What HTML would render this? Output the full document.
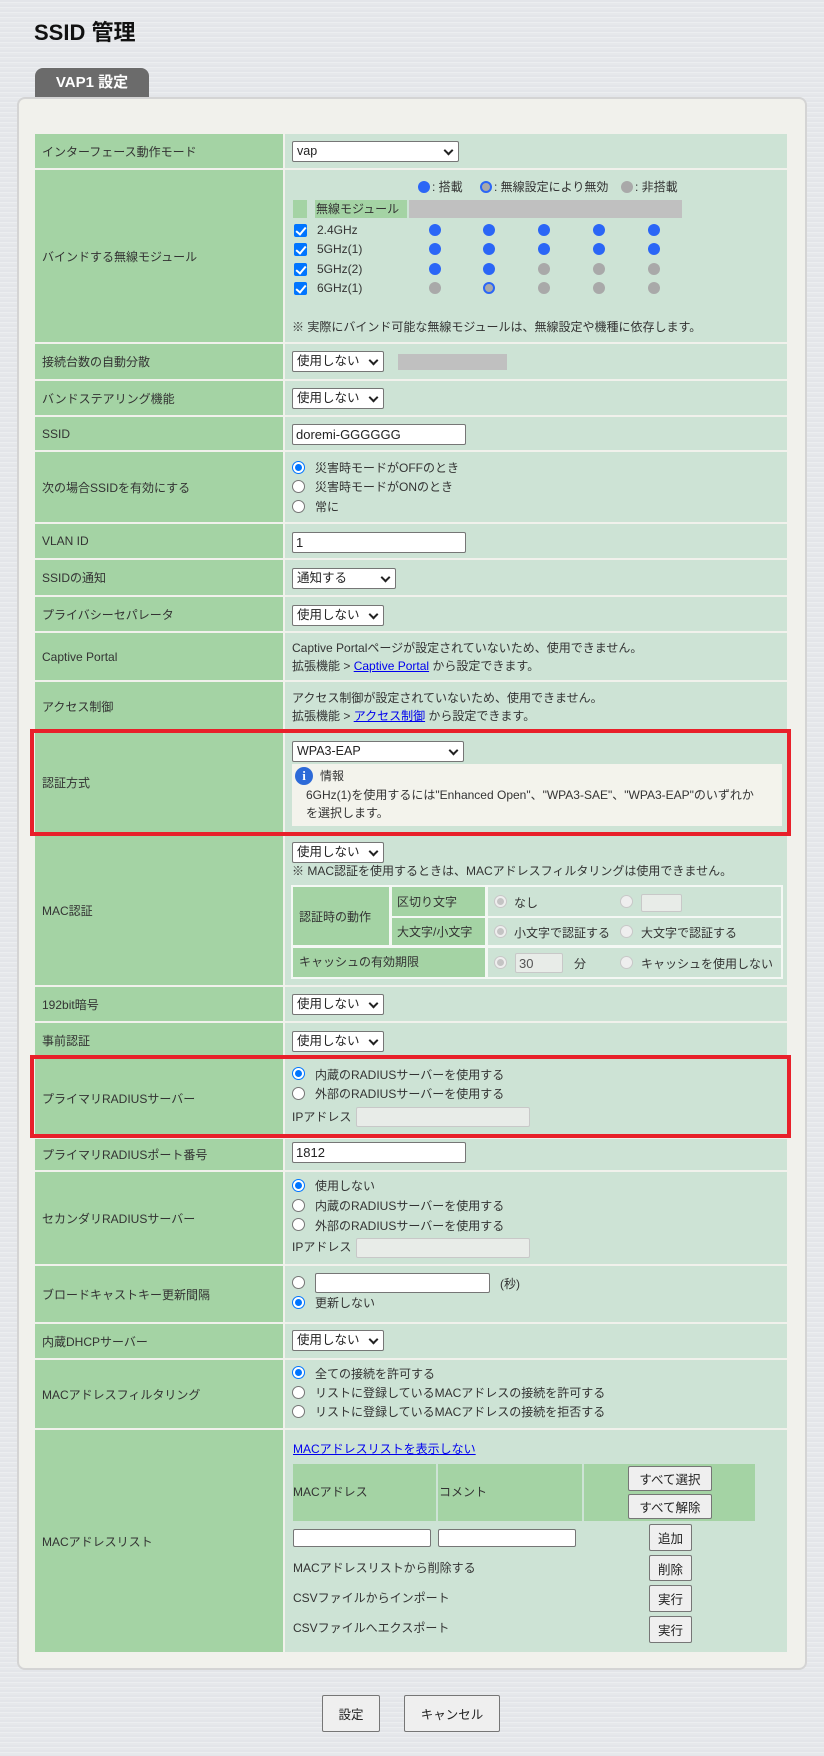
<!DOCTYPE html>
<html><head><meta charset="utf-8"><style>
*{box-sizing:border-box;margin:0;padding:0}
body{width:824px;height:1756px;position:relative;overflow:hidden;font-family:"Liberation Sans","Noto Sans CJK JP",sans-serif;font-size:12px;color:#333;
background:#e7e9ec repeating-linear-gradient(180deg,#e3e5e9 0 2px,#eceef0 2px 3px,#e6e8eb 3px 5px)}
.a{position:absolute}
.l{position:absolute;left:35px;width:248px;background:#a4d3a4;display:flex;align-items:center;padding-left:7px}
.v{position:absolute;left:285px;width:502px;background:#cde3d5}
.t{position:absolute;white-space:nowrap;line-height:14px;transform:translateY(-7px)}
.sel{position:absolute;height:21px;background:#fff;border:1px solid #767676;border-radius:2px;padding-left:4px;line-height:19px;font-size:12.5px;color:#222}
.sel:after{content:"";position:absolute;right:6px;top:5px;width:5px;height:5px;border-right:2px solid #222;border-bottom:2px solid #222;transform:rotate(45deg)}
.in{position:absolute;height:21px;background:#fff;border:1px solid #767676;border-radius:2px;padding-left:3px;line-height:19px;font-size:13px;color:#222}
.dis{background:#e8ece8;border-color:#c8c8c8}
.r{position:absolute;width:13px;height:13px;border-radius:50%;border:1px solid #767676;background:#fff;transform:translateY(-6px)}
.r.on{border:1px solid #0075ff;background:#fff}
.r.on:after{content:"";position:absolute;left:2px;top:2px;width:7px;height:7px;border-radius:50%;background:#0075ff}
.r.g{border-color:#c8c8c8;background:#eee}
.r.gon{border-color:#c8c8c8;background:#eee}
.r.gon:after{content:"";position:absolute;left:2px;top:2px;width:7px;height:7px;border-radius:50%;background:#c4c4c4}
.cb{position:absolute;width:13px;height:13px;border-radius:2px;background:#0075ff;transform:translateY(-6px)}
.cb:after{content:"";position:absolute;left:4px;top:1px;width:4px;height:8px;border-right:2px solid #fff;border-bottom:2px solid #fff;transform:rotate(40deg)}
.d{position:absolute;width:12px;height:12px;border-radius:50%;background:#2b66f6;transform:translate(-6px,-6px)}
.d.g{background:#a9a9a9}
.d.x{background:#a9a9a9;border:2px solid #2b66f6}
.btn{position:absolute;background:#efefef;border:1px solid #767676;border-radius:2px;text-align:center;font-size:12.5px;color:#222;display:flex;align-items:center;justify-content:center}
.red{position:absolute;left:30px;width:761px;border:4px solid #e8202a}
a{color:#00e;text-decoration:underline}
.gc{position:absolute;background:#a4d3a4}
.lc{position:absolute;background:#cde3d5}
</style></head><body>
<div class="a" style="left:34px;top:19px;font-size:22px;font-weight:bold;color:#111;line-height:28px">SSID 管理</div>
<div class="a" style="left:35px;top:68px;width:114px;height:30px;background:#6b6b6b;border-radius:8px 8px 0 0;color:#fff;font-weight:bold;font-size:15px;text-align:center;line-height:30px">VAP1 設定</div>
<div class="a" style="left:17px;top:97px;width:790px;height:1573px;background:#f1f1ec;border:2px solid #d4d4d4;border-radius:8px"></div>

<!-- rows -->
<div class="l" style="top:134px;height:34px">インターフェース動作モード</div><div class="v" style="top:134px;height:34px"></div>
<div class="l" style="top:170px;height:172px">バインドする無線モジュール</div><div class="v" style="top:170px;height:172px"></div>
<div class="l" style="top:344px;height:35px">接続台数の自動分散</div><div class="v" style="top:344px;height:35px"></div>
<div class="l" style="top:381px;height:34px">バンドステアリング機能</div><div class="v" style="top:381px;height:34px"></div>
<div class="l" style="top:417px;height:33px">SSID</div><div class="v" style="top:417px;height:33px"></div>
<div class="l" style="top:452px;height:70px">次の場合SSIDを有効にする</div><div class="v" style="top:452px;height:70px"></div>
<div class="l" style="top:524px;height:34px">VLAN ID</div><div class="v" style="top:524px;height:34px"></div>
<div class="l" style="top:560px;height:35px">SSIDの通知</div><div class="v" style="top:560px;height:35px"></div>
<div class="l" style="top:597px;height:34px">プライバシーセパレータ</div><div class="v" style="top:597px;height:34px"></div>
<div class="l" style="top:633px;height:47px">Captive Portal</div><div class="v" style="top:633px;height:47px"></div>
<div class="l" style="top:682px;height:48px">アクセス制御</div><div class="v" style="top:682px;height:48px"></div>
<div class="l" style="top:731px;height:103px">認証方式</div><div class="v" style="top:731px;height:103px"></div>
<div class="l" style="top:836px;height:149px">MAC認証</div><div class="v" style="top:836px;height:149px"></div>
<div class="l" style="top:987px;height:34px">192bit暗号</div><div class="v" style="top:987px;height:34px"></div>
<div class="l" style="top:1023px;height:34px">事前認証</div><div class="v" style="top:1023px;height:34px"></div>
<div class="l" style="top:1059px;height:78px">プライマリRADIUSサーバー</div><div class="v" style="top:1059px;height:78px"></div>
<div class="l" style="top:1139px;height:31px">プライマリRADIUSポート番号</div><div class="v" style="top:1139px;height:31px"></div>
<div class="l" style="top:1172px;height:92px">セカンダリRADIUSサーバー</div><div class="v" style="top:1172px;height:92px"></div>
<div class="l" style="top:1266px;height:56px">ブロードキャストキー更新間隔</div><div class="v" style="top:1266px;height:56px"></div>
<div class="l" style="top:1324px;height:34px">内蔵DHCPサーバー</div><div class="v" style="top:1324px;height:34px"></div>
<div class="l" style="top:1360px;height:68px">MACアドレスフィルタリング</div><div class="v" style="top:1360px;height:68px"></div>
<div class="l" style="top:1430px;height:222px">MACアドレスリスト</div><div class="v" style="top:1430px;height:222px"></div>

<div class="red" style="top:729px;height:107px"></div>
<div class="red" style="top:1055px;height:83px"></div>

<!-- row1 -->
<div class="sel" style="left:292px;top:141px;width:167px">vap</div>
<!-- bind -->
<div class="d" style="left:424px;top:187px"></div><div class="t" style="left:432px;top:187px">: 搭載</div>
<div class="d x" style="left:486px;top:187px"></div><div class="t" style="left:494px;top:187px">: 無線設定により無効</div>
<div class="d g" style="left:627px;top:187px"></div><div class="t" style="left:635px;top:187px">: 非搭載</div>
<div class="gc" style="left:293px;top:200px;width:14px;height:18px"></div>
<div class="gc" style="left:315px;top:200px;width:92px;height:18px"></div>
<div class="t" style="left:316px;top:209px">無線モジュール</div>
<div class="a" style="left:409px;top:200px;width:273px;height:18px;background:#c0c0c0"></div>
<div class="cb" style="left:294px;top:230px"></div><div class="t" style="left:317px;top:230px">2.4GHz</div>
<div class="cb" style="left:294px;top:249px"></div><div class="t" style="left:317px;top:249px">5GHz(1)</div>
<div class="cb" style="left:294px;top:269px"></div><div class="t" style="left:317px;top:269px">5GHz(2)</div>
<div class="cb" style="left:294px;top:288px"></div><div class="t" style="left:317px;top:288px">6GHz(1)</div>
<div class="d" style="left:435px;top:230px"></div><div class="d" style="left:489px;top:230px"></div><div class="d" style="left:544px;top:230px"></div><div class="d" style="left:599px;top:230px"></div><div class="d" style="left:654px;top:230px"></div>
<div class="d" style="left:435px;top:249px"></div><div class="d" style="left:489px;top:249px"></div><div class="d" style="left:544px;top:249px"></div><div class="d" style="left:599px;top:249px"></div><div class="d" style="left:654px;top:249px"></div>
<div class="d" style="left:435px;top:269px"></div><div class="d" style="left:489px;top:269px"></div><div class="d g" style="left:544px;top:269px"></div><div class="d g" style="left:599px;top:269px"></div><div class="d g" style="left:654px;top:269px"></div>
<div class="d g" style="left:435px;top:288px"></div><div class="d x" style="left:489px;top:288px"></div><div class="d g" style="left:544px;top:288px"></div><div class="d g" style="left:599px;top:288px"></div><div class="d g" style="left:654px;top:288px"></div>
<div class="t" style="left:292px;top:327px">※ 実際にバインド可能な無線モジュールは、無線設定や機種に依存します。</div>
<!-- 接続台数 -->
<div class="sel" style="left:292px;top:351px;width:92px">使用しない</div>
<div class="a" style="left:398px;top:354px;width:109px;height:16px;background:#c0c0c0"></div>
<div class="sel" style="left:292px;top:388px;width:92px">使用しない</div>
<div class="in" style="left:292px;top:424px;width:174px">doremi-GGGGGG</div>
<div class="r on" style="left:292px;top:467px"></div><div class="t" style="left:315px;top:468px">災害時モードがOFFのとき</div>
<div class="r" style="left:292px;top:486px"></div><div class="t" style="left:315px;top:487px">災害時モードがONのとき</div>
<div class="r" style="left:292px;top:506px"></div><div class="t" style="left:315px;top:507px">常に</div>
<div class="in" style="left:292px;top:532px;width:174px">1</div>
<div class="sel" style="left:292px;top:568px;width:104px">通知する</div>
<div class="sel" style="left:292px;top:605px;width:92px">使用しない</div>
<div class="t" style="left:292px;top:648px">Captive Portalページが設定されていないため、使用できません。</div>
<div class="t" style="left:292px;top:666px">拡張機能 &gt; <a>Captive Portal</a> から設定できます。</div>
<div class="t" style="left:292px;top:698px">アクセス制御が設定されていないため、使用できません。</div>
<div class="t" style="left:292px;top:716px">拡張機能 &gt; <a>アクセス制御</a> から設定できます。</div>
<!-- 認証方式 -->
<div class="sel" style="left:292px;top:741px;width:172px">WPA3-EAP</div>
<div class="a" style="left:292px;top:764px;width:490px;height:62px;background:#f3f3ec"></div>
<div class="a" style="left:295px;top:767px;width:18px;height:18px;border-radius:50%;background:#2d6ad8;color:#fff;font-weight:bold;font-size:13px;text-align:center;line-height:18px;font-family:'Liberation Serif',serif">i</div>
<div class="t" style="left:320px;top:776px">情報</div>
<div class="t" style="left:306px;top:795px">6GHz(1)を使用するには"Enhanced Open"、"WPA3-SAE"、"WPA3-EAP"のいずれか</div>
<div class="t" style="left:306px;top:813px">を選択します。</div>
<!-- MAC認証 -->
<div class="sel" style="left:292px;top:842px;width:92px">使用しない</div>
<div class="t" style="left:292px;top:871px">※ MAC認証を使用するときは、MACアドレスフィルタリングは使用できません。</div>
<div class="a" style="left:291px;top:885px;width:492px;height:94px;background:#f4f8f4"></div>
<div class="gc" style="left:293px;top:887px;width:96px;height:58px"></div><div class="t" style="left:299px;top:917px">認証時の動作</div>
<div class="gc" style="left:392px;top:887px;width:93px;height:29px"></div><div class="t" style="left:397px;top:902px">区切り文字</div>
<div class="gc" style="left:392px;top:918px;width:93px;height:27px"></div><div class="t" style="left:397px;top:932px">大文字/小文字</div>
<div class="gc" style="left:293px;top:948px;width:192px;height:29px"></div><div class="t" style="left:299px;top:962px">キャッシュの有効期限</div>
<div class="lc" style="left:488px;top:887px;width:293px;height:29px"></div>
<div class="lc" style="left:488px;top:918px;width:293px;height:27px"></div>
<div class="lc" style="left:488px;top:948px;width:293px;height:29px"></div>
<div class="r gon" style="left:494px;top:901px"></div><div class="t" style="left:514px;top:903px">なし</div>
<div class="r g" style="left:620px;top:901px"></div><div class="in dis" style="left:641px;top:894px;width:41px;height:18px"></div>
<div class="r gon" style="left:494px;top:931px"></div><div class="t" style="left:514px;top:933px">小文字で認証する</div>
<div class="r g" style="left:620px;top:931px"></div><div class="t" style="left:641px;top:933px">大文字で認証する</div>
<div class="r gon" style="left:494px;top:962px"></div><div class="in dis" style="left:515px;top:953px;width:48px;height:20px;color:#555">30</div><div class="t" style="left:574px;top:964px">分</div>
<div class="r g" style="left:620px;top:962px"></div><div class="t" style="left:641px;top:964px">キャッシュを使用しない</div>
<div class="sel" style="left:292px;top:994px;width:92px">使用しない</div>
<div class="sel" style="left:292px;top:1031px;width:92px">使用しない</div>
<!-- RADIUS -->
<div class="r on" style="left:292px;top:1073px"></div><div class="t" style="left:315px;top:1075px">内蔵のRADIUSサーバーを使用する</div>
<div class="r" style="left:292px;top:1093px"></div><div class="t" style="left:315px;top:1094px">外部のRADIUSサーバーを使用する</div>
<div class="t" style="left:292px;top:1117px">IPアドレス</div><div class="in dis" style="left:356px;top:1107px;width:174px;height:20px"></div>
<div class="in" style="left:292px;top:1142px;width:174px">1812</div>
<div class="r on" style="left:292px;top:1185px"></div><div class="t" style="left:315px;top:1186px">使用しない</div>
<div class="r" style="left:292px;top:1205px"></div><div class="t" style="left:315px;top:1206px">内蔵のRADIUSサーバーを使用する</div>
<div class="r" style="left:292px;top:1224px"></div><div class="t" style="left:315px;top:1226px">外部のRADIUSサーバーを使用する</div>
<div class="t" style="left:292px;top:1247px">IPアドレス</div><div class="in dis" style="left:356px;top:1238px;width:174px;height:20px"></div>
<div class="r" style="left:292px;top:1282px"></div><div class="in" style="left:315px;top:1273px;width:175px;height:20px"></div><div class="t" style="left:500px;top:1284px">(秒)</div>
<div class="r on" style="left:292px;top:1302px"></div><div class="t" style="left:315px;top:1303px">更新しない</div>
<div class="sel" style="left:292px;top:1330px;width:92px">使用しない</div>
<div class="r on" style="left:292px;top:1372px"></div><div class="t" style="left:315px;top:1374px">全ての接続を許可する</div>
<div class="r" style="left:292px;top:1392px"></div><div class="t" style="left:315px;top:1393px">リストに登録しているMACアドレスの接続を許可する</div>
<div class="r" style="left:292px;top:1411px"></div><div class="t" style="left:315px;top:1412px">リストに登録しているMACアドレスの接続を拒否する</div>
<!-- MAC list -->
<div class="t" style="left:293px;top:1449px"><a>MACアドレスリストを表示しない</a></div>
<div class="gc" style="left:293px;top:1464px;width:143px;height:57px"></div><div class="t" style="left:293px;top:1492px">MACアドレス</div>
<div class="gc" style="left:438px;top:1464px;width:144px;height:57px"></div><div class="t" style="left:439px;top:1492px">コメント</div>
<div class="gc" style="left:584px;top:1464px;width:171px;height:57px"></div>
<div class="btn" style="left:628px;top:1466px;width:84px;height:25px">すべて選択</div>
<div class="btn" style="left:628px;top:1494px;width:84px;height:25px">すべて解除</div>
<div class="in" style="left:293px;top:1529px;width:138px;height:18px"></div>
<div class="in" style="left:438px;top:1529px;width:138px;height:18px"></div>
<div class="btn" style="left:649px;top:1524px;width:43px;height:27px">追加</div>
<div class="t" style="left:293px;top:1568px">MACアドレスリストから削除する</div><div class="btn" style="left:649px;top:1555px;width:43px;height:26px">削除</div>
<div class="t" style="left:293px;top:1598px">CSVファイルからインポート</div><div class="btn" style="left:649px;top:1585px;width:43px;height:27px">実行</div>
<div class="t" style="left:293px;top:1628px">CSVファイルへエクスポート</div><div class="btn" style="left:649px;top:1616px;width:43px;height:27px">実行</div>
<!-- bottom buttons -->
<div class="btn" style="left:322px;top:1695px;width:58px;height:37px">設定</div>
<div class="btn" style="left:404px;top:1695px;width:96px;height:37px">キャンセル</div>
</body></html>
